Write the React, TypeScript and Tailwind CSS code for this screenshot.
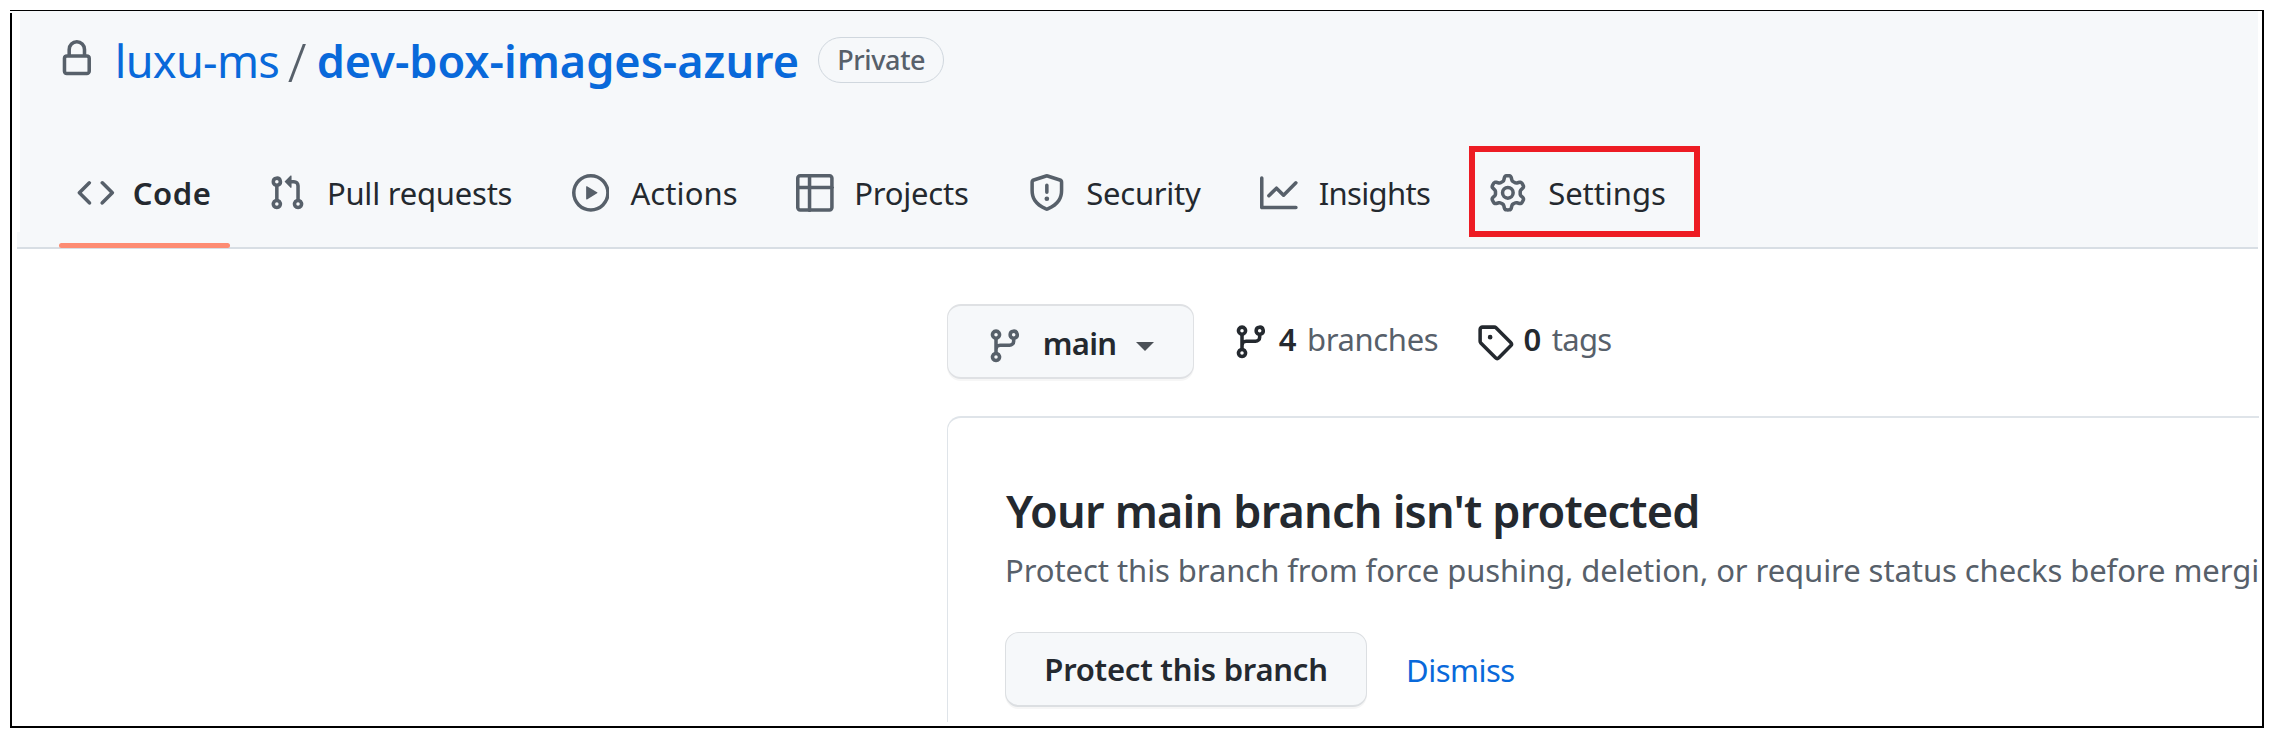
import type { ReactNode } from "react";

const PATHS = {
  lock: "M4 4v2h-.25A1.75 1.75 0 002 7.75v5.5c0 .966.784 1.75 1.75 1.75h8.5A1.75 1.75 0 0014 13.25v-5.5A1.75 1.75 0 0012.25 6H12V4a4 4 0 10-8 0zm6.5 2V4a2.5 2.5 0 10-5 0v2h5zM12 7.5h.25a.25.25 0 01.25.25v5.5a.25.25 0 01-.25.25h-8.5a.25.25 0 01-.25-.25v-5.5a.25.25 0 01.25-.25H12z",
  code: "M4.72 3.22a.75.75 0 011.06 1.06L2.06 8l3.72 3.72a.75.75 0 11-1.06 1.06L.47 8.53a.75.75 0 010-1.06l4.25-4.25zm6.56 0a.75.75 0 10-1.06 1.06L13.94 8l-3.72 3.72a.75.75 0 101.06 1.06l4.25-4.25a.75.75 0 000-1.06l-4.25-4.25z",
  pull: "M7.177 3.073L9.573.677A.25.25 0 0110 .854v4.792a.25.25 0 01-.427.177L7.177 3.427a.25.25 0 010-.354zM3.75 2.5a.75.75 0 100 1.5.75.75 0 000-1.5zm-2.25.75a2.25 2.25 0 113 2.122v5.256a2.251 2.251 0 11-1.5 0V5.372A2.25 2.25 0 011.5 3.25zM11 2.5h-1V4h1a1 1 0 011 1v5.628a2.251 2.251 0 101.5 0V5A2.5 2.5 0 0011 2.5zm1 10.25a.75.75 0 111.5 0 .75.75 0 01-1.5 0zM3.75 12a.75.75 0 100 1.5.75.75 0 000-1.5z",
  play: "M1.5 8a6.5 6.5 0 1113 0 6.5 6.5 0 01-13 0zM8 0a8 8 0 100 16A8 8 0 008 0zM6.379 5.227A.25.25 0 006 5.442v5.117a.25.25 0 00.379.214l4.264-2.559a.25.25 0 000-.428L6.379 5.227z",
  table: "M0 1.75C0 .784.784 0 1.75 0h12.5C15.216 0 16 .784 16 1.75v3.585a.746.746 0 010 .83v8.085A1.75 1.75 0 0114.25 16H6.309a.748.748 0 01-1.118 0H1.75A1.75 1.75 0 010 14.25V6.165a.746.746 0 010-.83V1.75zM1.5 6.5v7.75c0 .138.112.25.25.25H5v-8H1.5zM5 5H1.5V1.75a.25.25 0 01.25-.25H5V5zm1.5 1.5v8h7.75a.25.25 0 00.25-.25V6.5h-8zm8-1.5h-8V1.5h7.75a.25.25 0 01.25.25V5z",
  shield: "M7.467.133a1.75 1.75 0 011.066 0l5.25 1.68A1.75 1.75 0 0115 3.48V7c0 1.566-.32 3.182-1.303 4.682-.983 1.498-2.585 2.813-5.032 3.855a1.7 1.7 0 01-1.33 0c-2.447-1.042-4.049-2.357-5.032-3.855C1.32 10.182 1 8.566 1 7V3.48a1.75 1.75 0 011.217-1.667l5.25-1.68zm.61 1.429a.25.25 0 00-.153 0l-5.25 1.68a.25.25 0 00-.174.238V7c0 1.358.275 2.666 1.057 3.86.784 1.194 2.121 2.34 4.366 3.297a.2.2 0 00.154 0c2.245-.956 3.582-2.104 4.366-3.298C13.225 9.666 13.5 8.36 13.5 7V3.48a.25.25 0 00-.174-.237l-5.25-1.68zM9 10.5a1 1 0 11-2 0 1 1 0 012 0zm-.25-5.75a.75.75 0 10-1.5 0v3a.75.75 0 001.5 0v-3z",
  graph: "M1.5 1.75a.75.75 0 00-1.5 0v12.5c0 .414.336.75.75.75h14.5a.75.75 0 000-1.5H1.5V1.75zm14.28 2.53a.75.75 0 00-1.06-1.06L10 7.94 7.53 5.47a.75.75 0 00-1.06 0L3.22 8.72a.75.75 0 001.06 1.06L7 7.06l2.47 2.47a.75.75 0 001.06 0l5.25-5.25z",
  gear: "M7.429 1.525a6.593 6.593 0 011.142 0c.036.003.108.036.137.146l.289 1.105c.147.56.55.967.997 1.189.174.086.341.183.501.29.417.278.97.423 1.53.27l1.102-.303c.11-.03.175.016.195.046.219.31.41.641.573.989.014.031.022.11-.059.19l-.815.806c-.411.406-.562.957-.53 1.456a4.588 4.588 0 010 .582c-.032.499.119 1.05.53 1.456l.815.806c.08.08.073.159.059.19a6.494 6.494 0 01-.573.99c-.02.029-.086.074-.195.045l-1.103-.303c-.559-.153-1.112-.008-1.529.27-.16.107-.327.204-.5.29-.449.222-.851.628-.998 1.189l-.289 1.105c-.029.11-.101.143-.137.146a6.613 6.613 0 01-1.142 0c-.036-.003-.108-.037-.137-.146l-.289-1.105c-.147-.56-.55-.967-.997-1.189a4.502 4.502 0 01-.501-.29c-.417-.278-.97-.423-1.53-.27l-1.102.303c-.11.03-.175-.016-.195-.046a6.492 6.492 0 01-.573-.989c-.014-.031-.022-.11.059-.19l.815-.806c.411-.406.562-.957.53-1.456a4.587 4.587 0 010-.582c.032-.499-.119-1.05-.53-1.456l-.815-.806c-.08-.08-.073-.159-.059-.19a6.44 6.44 0 01.573-.99c.02-.029.086-.075.195-.045l1.103.303c.559.153 1.112.008 1.529-.27.16-.107.327-.204.5-.29.449-.222.851-.628.998-1.189l.289-1.105c.029-.11.101-.143.137-.146zM8 0c-.236 0-.47.01-.701.03-.743.065-1.29.615-1.458 1.261l-.29 1.106c-.017.066-.078.158-.211.224a5.994 5.994 0 00-.668.386c-.123.082-.233.09-.3.071L3.27 2.776c-.644-.177-1.392.02-1.82.63a7.977 7.977 0 00-.704 1.217c-.315.675-.111 1.422.363 1.891l.815.806c.05.048.098.147.088.294a6.084 6.084 0 000 .772c.01.147-.038.246-.088.294l-.815.806c-.474.469-.678 1.216-.363 1.891.2.428.436.835.704 1.218.428.609 1.176.806 1.82.63l1.103-.303c.066-.019.176-.011.299.071.213.143.436.272.668.386.133.066.194.158.212.224l.289 1.106c.169.646.715 1.196 1.458 1.26a8.094 8.094 0 001.402 0c.743-.064 1.29-.614 1.458-1.26l.29-1.106c.017-.066.078-.158.211-.224a5.98 5.98 0 00.668-.386c.123-.082.233-.09.3-.071l1.102.302c.644.177 1.392-.02 1.82-.63.268-.382.505-.789.704-1.217.315-.675.111-1.422-.364-1.891l-.814-.806c-.05-.048-.098-.147-.088-.294a6.1 6.1 0 000-.772c-.01-.147.039-.246.088-.294l.814-.806c.475-.469.679-1.216.364-1.891a7.992 7.992 0 00-.704-1.218c-.428-.609-1.176-.806-1.82-.63l-1.103.303c-.066.019-.176.011-.299-.071a5.991 5.991 0 00-.668-.386c-.133-.066-.194-.158-.212-.224L10.16 1.29C9.99.645 9.444.095 8.701.031A8.094 8.094 0 008 0zm1.5 8a1.5 1.5 0 11-3 0 1.5 1.5 0 013 0zM11 8a3 3 0 11-6 0 3 3 0 016 0z",
  branch: "M11.75 2.5a.75.75 0 100 1.5.75.75 0 000-1.5zm-2.25.75a2.25 2.25 0 113 2.122V6A2.5 2.5 0 0110 8.5H6a1 1 0 00-1 1v1.128a2.251 2.251 0 11-1.5 0V5.372a2.25 2.25 0 111.5 0v1.836A2.492 2.492 0 016 7h4a1 1 0 001-1v-.628A2.25 2.25 0 019.5 3.25zM4.25 12a.75.75 0 100 1.5.75.75 0 000-1.5zM3.5 3.25a.75.75 0 111.5 0 .75.75 0 01-1.5 0z",
  tag: "M2.5 7.775V2.75a.25.25 0 01.25-.25h5.025a.25.25 0 01.177.073l6.25 6.25a.25.25 0 010 .354l-5.025 5.025a.25.25 0 01-.354 0l-6.25-6.25a.25.25 0 01-.073-.177zm-1.5 0V2.75C1 1.784 1.784 1 2.75 1h5.025c.464 0 .91.184 1.238.513l6.25 6.25a1.75 1.75 0 010 2.474l-5.026 5.026a1.75 1.75 0 01-2.474 0l-6.25-6.25A1.75 1.75 0 011 7.775zM6 5a1 1 0 100 2 1 1 0 000-2z",
};

function Icon({ name, className = "" }: { name: keyof typeof PATHS; className?: string }) {
  return (
    <svg viewBox="0 0 16 16" className={`h-[37.7px] w-[37.7px] shrink-0 fill-current ${className}`} aria-hidden="true">
      <path fillRule="evenodd" d={PATHS[name]} />
    </svg>
  );
}

function Tab({ icon, width, textClass, children }: { icon: keyof typeof PATHS; width: string; textClass: string; children: ReactNode }) {
  return (
    <a className={`flex shrink-0 items-center ${width}`}>
      <Icon name={icon} className="text-[#57606a]" />
      <span className={textClass}>{children}</span>
    </a>
  );
}

function RepoHeader() {
  return (
    <header className="relative ml-[5px] mr-1 flex h-[238px] flex-col border-b-2 border-[#d8dee4] bg-[#f6f8fa]">
      <span className="absolute left-0 top-0 h-[221px] w-[3px] bg-white" />
      <div className="flex h-[98px] items-center pl-[41px]">
        <Icon name="lock" className="mr-[19px] -mt-[2px] text-[#57606a]" />
        <span className="mt-[2px] w-[173px] text-[45px] leading-[60px] tracking-[-0.66px] text-[#0969da]">luxu-ms</span>
        <span className="mt-[2px] w-[29px] text-[54px] font-light leading-[60px] text-[#57606a]">/</span>
        <span className="mt-[2px] w-[501.5px] text-[45px] font-semibold leading-[60px] text-[#0969da]">dev-box-images-azure</span>
        <span className="flex h-[46px] w-[126px] items-center justify-center rounded-full border border-[#d0d7de] text-[27px] font-medium leading-[40px] tracking-[-0.37px] text-[#57606a]">Private</span>
      </div>
      <nav className="flex grow items-stretch text-[31px] leading-[42px] text-[#24292f]">
        <div className="relative ml-[42px] flex w-[171px] shrink-0 pl-[18px]">
          <div className="mt-[30px] flex items-center self-center">
            <Tab icon="code" width="w-[153px]" textClass="ml-[18px] font-semibold tracking-[0.6px]">Code</Tab>
          </div>
          <span className="absolute -bottom-px left-0 h-[5px] w-[171px] rounded-full bg-[#fd8c73]" />
        </div>
        <div className="mt-[30px] ml-[38.2px] flex items-center self-center">
          <Tab icon="pull" width="w-[303.5px]" textClass="ml-[21px] tracking-[-0.22px]">Pull requests</Tab>
          <Tab icon="play" width="w-[224.3px]" textClass="ml-[21px] tracking-[0.1px]">Actions</Tab>
          <Tab icon="table" width="w-[231.6px]" textClass="ml-[20.5px] tracking-[-0.2px]">Projects</Tab>
          <Tab icon="shield" width="w-[232.4px]" textClass="ml-[21px] tracking-[-0.25px]">Security</Tab>
          <Tab icon="graph" width="w-[229.5px]" textClass="ml-[21px] tracking-[-0.65px]">Insights</Tab>
          <div className="relative">
            <Tab icon="gear" width="w-[200px]" textClass="ml-[21px] tracking-[-0.05px]">Settings</Tab>
            <span className="absolute -left-[20.5px] -top-[26px] h-[91px] w-[231px] border-[6px] border-[#ed1c24]" />
          </div>
        </div>
      </nav>
    </header>
  );
}

function BranchBar() {
  return (
    <div className="flex items-start text-[31px] leading-[42px] text-[#24292f]">
      <button className="flex h-[75px] w-[247px] shrink-0 items-center rounded-[14px] border-x border-y-2 border-[#dfe1e4] bg-[#f6f8fa] pl-[38px] shadow-[0_2px_0_rgba(27,31,36,0.04)]">
        <Icon name="branch" className="mt-[8px] text-[#57606a]" />
        <span className="ml-[19px] mt-[3px] w-[93px] text-left font-semibold tracking-[-0.7px]">main</span>
        <svg viewBox="0 0 18 9" className="mt-[10px] h-[9px] w-[18px] fill-[#4b5157]" aria-hidden="true">
          <path d="M0 0h18l-9 9z" />
        </svg>
      </button>
      <a className="ml-[38px] mt-[13px] flex items-center">
        <Icon name="branch" className="mt-[6px]" />
        <strong className="ml-[9px] font-semibold">4</strong>
        <span className="ml-[10.5px] tracking-[-0.35px] text-[#57606a]">branches</span>
      </a>
      <a className="ml-[38px] mt-[13px] flex items-center">
        <Icon name="tag" className="mt-[6px]" />
        <strong className="ml-[9.5px] font-semibold">0</strong>
        <span className="ml-[10.5px] tracking-[-0.7px] text-[#57606a]">tags</span>
      </a>
    </div>
  );
}

function ProtectionCard() {
  return (
    <section className="mt-[37px] flex h-[306px] flex-col overflow-hidden rounded-tl-[14px] border-l border-t-2 border-[#dfe4e9] pl-[58px]">
      <h2 className="mt-[62px] whitespace-nowrap text-[45px] font-semibold leading-[61px] tracking-[-0.79px] text-[#24292f]">Your main branch isn't protected</h2>
      <p className="-ml-px mt-[8px] whitespace-nowrap text-[31px] leading-[42px] tracking-[-0.07px] text-[#57606a]">Protect this branch from force pushing, deletion, or require status checks before mergi</p>
      <div className="-ml-px mt-[41px] flex items-center text-[31px] leading-[42px]">
        <button className="flex h-[75px] w-[362px] items-center justify-center rounded-[14px] border border-b-2 border-[#dcdfe2] bg-[#f6f8fa] font-semibold tracking-[-0.24px] text-[#24292f] shadow-[0_2px_0_rgba(27,31,36,0.04)]">Protect this branch</button>
        <a className="ml-[39px] tracking-[-0.5px] text-[#0969da]">Dismiss</a>
      </div>
    </section>
  );
}

export default function App() {
  return (
    <div className="h-[735px] w-[2274px] overflow-hidden bg-white px-[10px] pt-[10px] font-['Noto_Sans','Open_Sans',sans-serif]">
      <div className="relative h-[718px] border-2 border-t border-black">
        <span className="absolute -left-0.5 top-0 h-0.5 w-[10px] bg-white" />
        <RepoHeader />
        <main className="ml-[935px] mr-[3px] pt-[55px]">
          <BranchBar />
          <ProtectionCard />
        </main>
      </div>
    </div>
  );
}
